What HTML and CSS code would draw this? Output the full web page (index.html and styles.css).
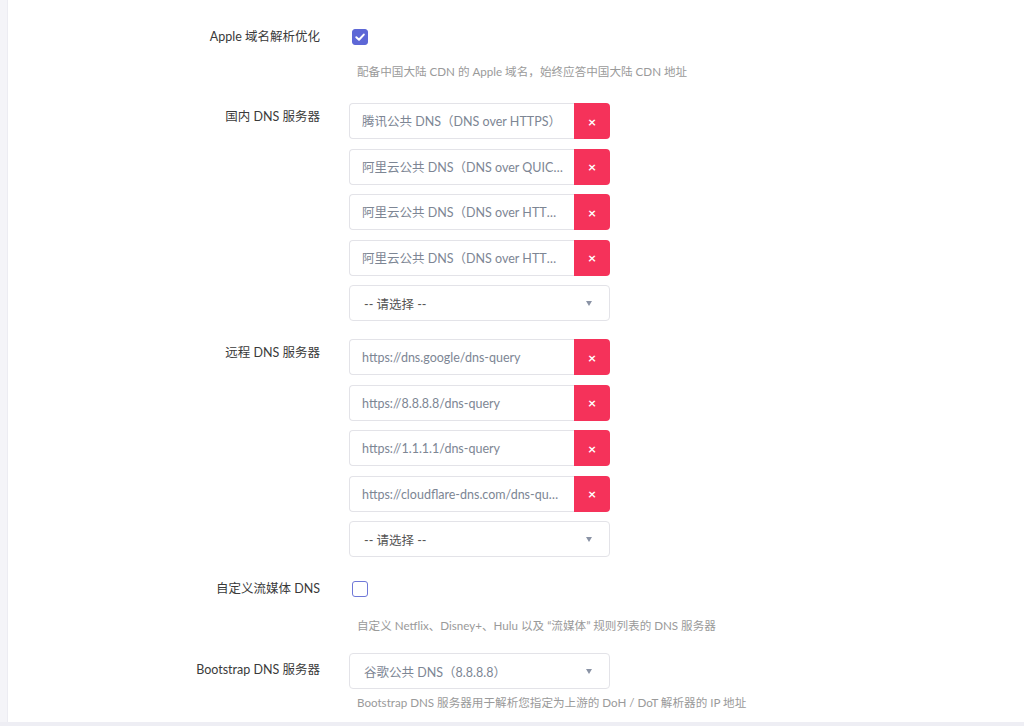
FILE: index.html
```html
<!DOCTYPE html>
<html lang="zh-CN">
<head>
<meta charset="utf-8">
<title>DNS 设置</title>
<link rel="stylesheet" href="styles.css">
</head>
<body>
<div class="page">
  <div class="card">
    <div class="row">
      <div class="label">Apple 域名解析优化</div>
      <div class="control">
        <div class="check-line"><span class="checkbox checked"><svg viewBox="0 0 16 16" width="16" height="16"><path d="M4.3 8.3 L7 10.8 L11.8 5.6" fill="none" stroke="#fff" stroke-width="2" stroke-linecap="round" stroke-linejoin="round"/></svg></span></div>
        <div class="help">配备中国大陆 CDN 的 Apple 域名，始终应答中国大陆 CDN 地址</div>
      </div>
    </div>

    <div class="row">
      <div class="label">国内 DNS 服务器</div>
      <div class="control list">
        <div class="group"><div class="field">腾讯公共 DNS（DNS over HTTPS）</div><span class="del">×</span></div>
        <div class="group"><div class="field">阿里云公共 DNS（DNS over QUIC）</div><span class="del">×</span></div>
        <div class="group"><div class="field">阿里云公共 DNS（DNS over HTTPS/3）</div><span class="del">×</span></div>
        <div class="group"><div class="field">阿里云公共 DNS（DNS over HTTPS）</div><span class="del">×</span></div>
        <div class="select placeholder"><span>-- 请选择 --</span><span class="caret"></span></div>
      </div>
    </div>

    <div class="row">
      <div class="label">远程 DNS 服务器</div>
      <div class="control list">
        <div class="group"><div class="field">https://dns.google/dns-query</div><span class="del">×</span></div>
        <div class="group"><div class="field">https://8.8.8.8/dns-query</div><span class="del">×</span></div>
        <div class="group"><div class="field">https://1.1.1.1/dns-query</div><span class="del">×</span></div>
        <div class="group"><div class="field">https://cloudflare-dns.com/dns-query</div><span class="del">×</span></div>
        <div class="select placeholder"><span>-- 请选择 --</span><span class="caret"></span></div>
      </div>
    </div>

    <div class="row">
      <div class="label">自定义流媒体 DNS</div>
      <div class="control">
        <div class="check-line"><span class="checkbox"></span></div>
        <div class="help help-tight">自定义 Netflix、Disney+、Hulu 以及 “流媒体” 规则列表的 DNS 服务器</div>
      </div>
    </div>

    <div class="row">
      <div class="label label-mid">Bootstrap DNS 服务器</div>
      <div class="control">
        <div class="select"><span>谷歌公共 DNS（8.8.8.8）</span><span class="caret"></span></div>
        <div class="help help-under">Bootstrap DNS 服务器用于解析您指定为上游的 DoH / DoT 解析器的 IP 地址</div>
      </div>
    </div>
  </div>
</div>
</body>
</html>
```

FILE: styles.css
```css
html, body {
  margin: 0;
  padding: 0;
}
body {
  background: #eeeef4;
  font-family: Lato, "Noto Sans CJK SC", sans-serif;
  font-size: 12.5px;
  color: #333;
  height: 726px;
  overflow: hidden;
}
.page {
  padding-left: 7px;
  background: #f4f4f8;
  height: 722px;
}
.card {
  background: #fff;
  border-left: 1px solid #ececf2;
  height: 722px;
  box-sizing: border-box;
  padding-top: 23px;
  display: flex;
  flex-direction: column;
  gap: 18px;
}
.row {
  display: grid;
  grid-template-columns: 312px 261px;
  column-gap: 29px;
  align-items: start;
}
.label {
  text-align: right;
  line-height: 26px;
  padding-top: 1px;
  color: #3a3a3a;
  white-space: nowrap;
}
.label-mid {
  padding-top: 4px;
}
.control {
  display: flex;
  flex-direction: column;
}
.list {
  gap: 9.5px;
}
.check-line {
  height: 26px;
  display: flex;
  align-items: flex-start;
  padding-left: 3px;
}
.checkbox {
  margin-top: 6px;
  width: 16px;
  height: 16px;
  box-sizing: border-box;
  border: 1.5px solid #6f78d8;
  border-radius: 3px;
  background: #fff;
  display: flex;
}
.checkbox.checked {
  background: #5d67d6;
  border-color: #5d67d6;
}
.checkbox svg {
  margin: -1.5px;
}
.help {
  margin-top: 14px;
  margin-bottom: 4px;
  padding-left: 8px;
  line-height: 18px;
  font-size: 11.6px;
  color: #9a9a9a;
  white-space: nowrap;
}
.help-tight {
  margin-top: 16px;
  margin-bottom: 0;
}
.help-under {
  margin-top: 5px;
  margin-bottom: 0;
}
.group {
  display: flex;
  height: 36px;
}
.field {
  flex: 1;
  min-width: 0;
  box-sizing: border-box;
  border: 1px solid #e3e3e8;
  border-right: none;
  border-radius: 4px 0 0 4px;
  padding: 1px 11px 0 12px;
  line-height: 33px;
  color: #7d8694;
  white-space: nowrap;
  overflow: hidden;
  text-overflow: ellipsis;
}
.del {
  width: 36px;
  flex: none;
  background: #f5325a;
  color: #fff;
  border-radius: 0 4px 4px 0;
  display: flex;
  align-items: center;
  justify-content: center;
  font-weight: 700;
  font-size: 14px;
}
.select {
  height: 36px;
  box-sizing: border-box;
  border: 1px solid #e3e3e8;
  border-radius: 4px;
  padding: 1px 17px 0 14px;
  display: flex;
  align-items: center;
  justify-content: space-between;
  color: #7d8694;
}
.select.placeholder {
  color: #555;
  padding-left: 14px;
}
.caret {
  width: 0;
  height: 0;
  border-left: 3.5px solid transparent;
  border-right: 3.5px solid transparent;
  border-top: 5px solid #8a93a5;
}
```
